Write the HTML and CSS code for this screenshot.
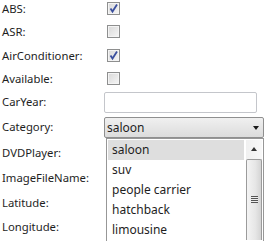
FILE: index.html
```html
<!DOCTYPE html>
<html lang="en">
<head>
  <meta charset="UTF-8" />
  <title>Car properties</title>
  <link rel="stylesheet" href="styles.css">
</head>
<body>
  <div class="props">
    <div class="row r1">
      <span class="label">ABS:</span>
      <span class="check on"><svg viewBox="0 0 11 11"><path d="M2.5 5.5 L4.5 8.5 L9 1.5" /></svg></span>
    </div>
    <div class="row r2">
      <span class="label">ASR:</span>
      <span class="check"></span>
    </div>
    <div class="row r3">
      <span class="label">AirConditioner:</span>
      <span class="check on"><svg viewBox="0 0 11 11"><path d="M2.5 5.5 L4.5 8.5 L9 1.5" /></svg></span>
    </div>
    <div class="row r4">
      <span class="label">Available:</span>
      <span class="check"></span>
    </div>
    <div class="row r5">
      <span class="label">CarYear:</span>
      <span class="textbox"></span>
    </div>
    <div class="row r6">
      <span class="label">Category:</span>
      <div class="combo-wrap">
        <div class="combo">
          <span>saloon</span>
          <span class="arrow"></span>
        </div>
        <div class="dropdown">
          <ul class="items">
            <li class="selected">saloon</li>
            <li>suv</li>
            <li>people carrier</li>
            <li>hatchback</li>
            <li>limousine</li>
          </ul>
          <div class="scrollbar">
            <div class="btn-up"><span class="up"></span></div>
            <div class="thumb"><span class="grip"></span></div>
          </div>
        </div>
      </div>
    </div>
    <div class="row r7">
      <span class="label">DVDPlayer:</span>
    </div>
    <div class="row r8">
      <span class="label">ImageFileName:</span>
    </div>
    <div class="row r9">
      <span class="label">Latitude:</span>
    </div>
    <div class="row r10">
      <span class="label">Longitude:</span>
    </div>
  </div>
</body>
</html>
```

FILE: styles.css
```css
html, body {
  margin: 0;
  padding: 0;
  height: 100%;
  background: #fff;
  font-family: 'Noto Sans', 'Open Sans', sans-serif;
  font-size: 11.3px;
  color: #1e1e1e;
  overflow: hidden;
}

.props {
  display: flex;
  flex-direction: column;
}

.row {
  display: flex;
  align-items: flex-start;
}

.r1, .r3, .r4 { height: 23px; }
.r2 { height: 24px; }
.r5 { height: 25px; }
.r6 { height: 26px; }
.r7, .r8 { height: 25px; }
.r9 { height: 24px; }
.r10 { height: 23px; }

.label {
  width: 102px;
  padding-left: 2px;
  line-height: 18px;
  flex-shrink: 0;
}

.check {
  box-sizing: border-box;
  width: 13px;
  height: 13px;
  margin: 2px 0 0 3px;
  border: 1px solid #8e8f8f;
  background: linear-gradient(135deg, #d8d8d8, #f6f6f6);
  box-shadow: inset 0 0 0 1px #f4f4f4;
}

.check svg {
  display: block;
  width: 11px;
  height: 11px;
}

.check path {
  fill: none;
  stroke: #3a4f9e;
  stroke-width: 1.8;
}

.textbox {
  box-sizing: border-box;
  width: 153px;
  height: 21px;
  margin-top: -1px;
  border: 1px solid #c4c6cb;
  border-radius: 2px;
  background: #fff;
}

.combo-wrap {
  position: relative;
  margin-top: -1px;
}

.combo {
  box-sizing: border-box;
  display: flex;
  align-items: center;
  justify-content: space-between;
  width: 160px;
  height: 21px;
  padding: 0 4px 0 2px;
  border: 1px solid #8f8f8f;
  border-radius: 2px;
  background: linear-gradient(#f0f0f0, #dcdcdc);
  font-size: 12px;
}

.arrow {
  width: 0;
  height: 0;
  border-left: 3.5px solid transparent;
  border-right: 3.5px solid transparent;
  border-top: 4px solid #1a1a1a;
}

/* open popup of the combo */
.dropdown {
  position: absolute;
  top: 21px;
  left: 2px;
  box-sizing: border-box;
  width: 158px;
  height: 103px;
  display: flex;
  padding: 1px;
  border: 1px solid #979797;
  border-bottom: none;
  background: #fff;
  overflow: hidden;
}

.items {
  list-style: none;
  margin: 0;
  padding: 0;
  flex: 1;
  font-size: 12px;
}

.items li {
  height: 20px;
  line-height: 20px;
  padding-left: 4px;
}

.items li.selected {
  background: #dedede;
}

.scrollbar {
  width: 16px;
  margin-left: 2px;
  display: flex;
  flex-direction: column;
  background: linear-gradient(90deg, #f0f0f0, #f8f8f8);
}

.btn-up {
  height: 18px;
  display: flex;
  align-items: center;
  justify-content: center;
}

.up {
  width: 0;
  height: 0;
  border-left: 3.5px solid transparent;
  border-right: 3.5px solid transparent;
  border-bottom: 4px solid #333;
}

.thumb {
  box-sizing: border-box;
  flex: 1;
  margin-top: 1px;
  border: 1px solid #9b9b9b;
  border-bottom: none;
  border-radius: 2px 2px 0 0;
  background: linear-gradient(90deg, #f4f4f4, #e6e6e6 60%, #d4d4d4);
  display: flex;
  justify-content: center;
}

.grip {
  width: 7px;
  height: 7px;
  margin-top: 36px;
  background: repeating-linear-gradient(#555 0 1px, #eee 1px 2px);
}
```
